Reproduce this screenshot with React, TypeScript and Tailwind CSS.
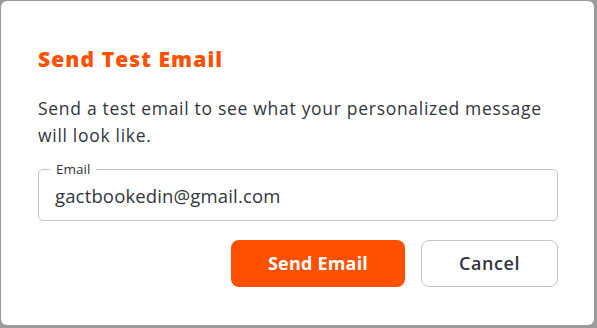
export default function App() {
  return (
    <div className="w-[597px] h-[328px] bg-[#9b9b9b] pt-px pl-px pr-[3px] pb-[3px]" style={{ fontFamily: "'Open Sans', 'Noto Sans', sans-serif" }}>
      <div className="h-full w-full bg-white rounded-[6px] pl-[37px] pr-[36px] pt-[44px] flex flex-col">
        <h2 className="text-[21px] leading-[28px] font-extrabold text-[#ff5000] tracking-[1.1px]">Send Test Email</h2>
        <p className="mt-[22px] text-[17.5px] leading-[27px] text-[#32363c] tracking-[0.7px]">
          Send a test email to see what your personalized message will look like.
        </p>
        <div className="relative mt-[20px] h-[52px] border border-[#c4c4c4] rounded-[5px] flex items-center pl-[16px] pt-px">
          <span className="absolute -top-[8px] left-[11px] bg-white px-[6px] text-[13.5px] leading-[14px] text-[#32363c]">Email</span>
          <span className="text-[18.5px] text-[#32363c] tracking-[0.15px]">gactbookedin@gmail.com</span>
        </div>
        <div className="mt-[19px] flex justify-end gap-[16px]">
          <button className="w-[174px] h-[47px] rounded-[8px] bg-[#ff5000] text-white text-[18px] font-bold tracking-[0.2px]">Send Email</button>
          <button className="w-[137px] h-[47px] rounded-[8px] border border-[#c4c4c4] bg-white text-[#32363c] text-[18px] font-semibold tracking-[0.6px]">Cancel</button>
        </div>
      </div>
    </div>
  );
}
